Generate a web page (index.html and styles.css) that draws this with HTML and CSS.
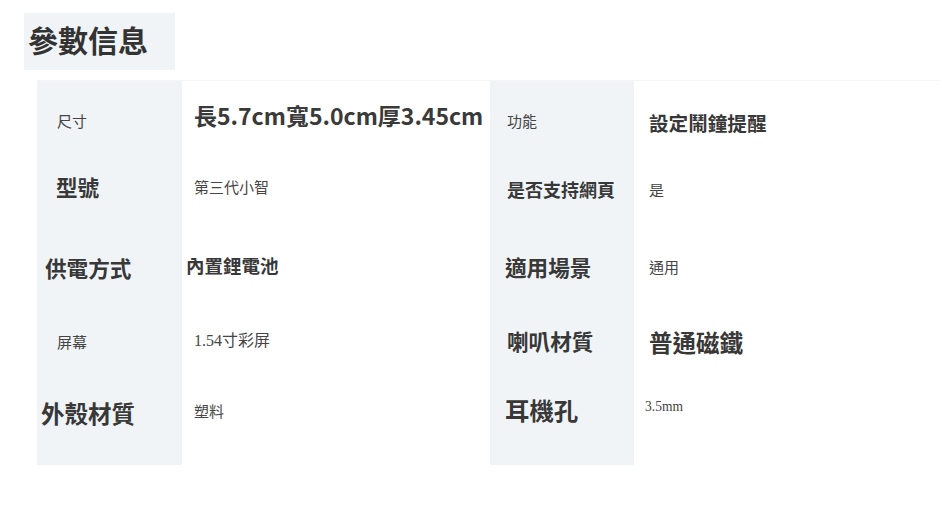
FILE: index.html
```html
<!DOCTYPE html>
<html lang="zh-Hant">
<head>
    <meta charset="UTF-8">
    <meta name="viewport" content="width=device-width, initial-scale=1.0">
    <title>參數信息</title>
    <link rel="stylesheet" href="styles.css">
</head>
<body>
    <div class="page">
        <h2 class="title">參數信息</h2>

        <div class="params">
            <div class="cell label"><span class="thin in-20 dn-2">尺寸</span></div>
            <div class="cell"><span class="big in-12 up-3">長5.7cm寬5.0cm厚3.45cm</span></div>
            <div class="cell label"><span class="thin in-17 dn-2">功能</span></div>
            <div class="cell"><span class="mid in-15 dn-5">設定鬧鐘提醒</span></div>

            <div class="cell label"><span class="lg in-19 up-5">型號</span></div>
            <div class="cell"><span class="thin in-12 up-6">第三代小智</span></div>
            <div class="cell label"><span class="mid in-17 up-3">是否支持網頁</span></div>
            <div class="cell"><span class="thin in-15 up-3">是</span></div>

            <div class="cell label"><span class="lg in-8 dn-2">供電方式</span></div>
            <div class="cell"><span class="mid wide in-4 up-1">內置鋰電池</span></div>
            <div class="cell label"><span class="lg in-15 dn-1">適用場景</span></div>
            <div class="cell"><span class="thin in-15">通用</span></div>

            <div class="cell label"><span class="thin in-20 dn-1">屏幕</span></div>
            <div class="cell"><span class="thin num in-12 dn-1">1.54寸彩屏</span></div>
            <div class="cell label"><span class="lg in-17 dn-1">喇叭材質</span></div>
            <div class="cell"><span class="xl in-15 dn-3">普通磁鐵</span></div>

            <div class="cell label"><span class="xl in-4">外殼材質</span></div>
            <div class="cell"><span class="thin in-12 up-4">塑料</span></div>
            <div class="cell label"><span class="xxl in-15 up-4">耳機孔</span></div>
            <div class="cell"><span class="thin num small in-11 up-8">3.5mm</span></div>
        </div>
    </div>
</body>
</html>
```

FILE: styles.css
```css
/* Reset */
* {
    margin: 0;
    padding: 0;
    box-sizing: border-box;
}

body {
    background: #fff;
    color: #333;
    font-family: "Noto Sans CJK TC", "Noto Sans", sans-serif;
}

.page {
    width: 942px;
    height: 520px;
    padding-top: 13px;
}

.title {
    display: flex;
    align-items: center;
    width: 151px;
    height: 57px;
    margin-left: 24px;
    padding: 0 0 6px 4px;
    background: #f1f4f7;
    color: #333;
    font-size: 30px;
    font-weight: 700;
    line-height: 1;
}

.params {
    display: grid;
    grid-template-columns: 145px 308px 144px 305px;
    grid-auto-rows: 74px;
    width: 902px;
    margin: 10px 0 0 37px;
    padding-bottom: 14px;
    border-top: 1px solid #f5f5f5;
    background: linear-gradient(to right, #f1f4f7 145px, #fff 145px, #fff 453px, #f1f4f7 453px, #f1f4f7 597px, #fff 597px);
}

.cell {
    display: flex;
    align-items: center;
    white-space: nowrap;
}

.cell span {
    position: relative;
    line-height: 1;
}

/* text looks */
.thin {
    font-size: 15px;
    font-weight: 400;
    color: #454545;
}

.num {
    font-family: "Liberation Serif", "Noto Sans CJK TC", serif;
    font-size: 16px;
}

.small {
    font-size: 15px;
    transform: scaleX(0.9);
    transform-origin: left center;
}

.mid {
    font-size: 18px;
    font-weight: 700;
    color: #383838;
}

.mid.wide {
    font-size: 18.5px;
}

.lg {
    font-size: 21.6px;
    font-weight: 700;
    color: #383838;
}

.xl {
    font-size: 23.5px;
    font-weight: 700;
    color: #383838;
}

.xxl {
    font-size: 24.4px;
    font-weight: 700;
    color: #383838;
}

.big {
    font-size: 23px;
    font-weight: 700;
    color: #3a3a3a;
}

.cell .mid.dn-5 {
    font-size: 19.6px;
}

/* indents */
.in-4 { margin-left: 4px; }
.in-8 { margin-left: 8px; }
.in-11 { margin-left: 11px; }
.in-12 { margin-left: 12px; }
.in-15 { margin-left: 15px; }
.in-17 { margin-left: 17px; }
.in-19 { margin-left: 19px; }
.in-20 { margin-left: 20px; }

/* small vertical nudges, the source image is uneven */
.up-1 { top: -1px; }
.up-3 { top: -3px; }
.up-4 { top: -4px; }
.up-5 { top: -5px; }
.up-6 { top: -6px; }
.up-8 { top: -8px; }
.dn-1 { top: 1px; }
.dn-2 { top: 2px; }
.dn-3 { top: 3px; }
.dn-5 { top: 5px; }
```
